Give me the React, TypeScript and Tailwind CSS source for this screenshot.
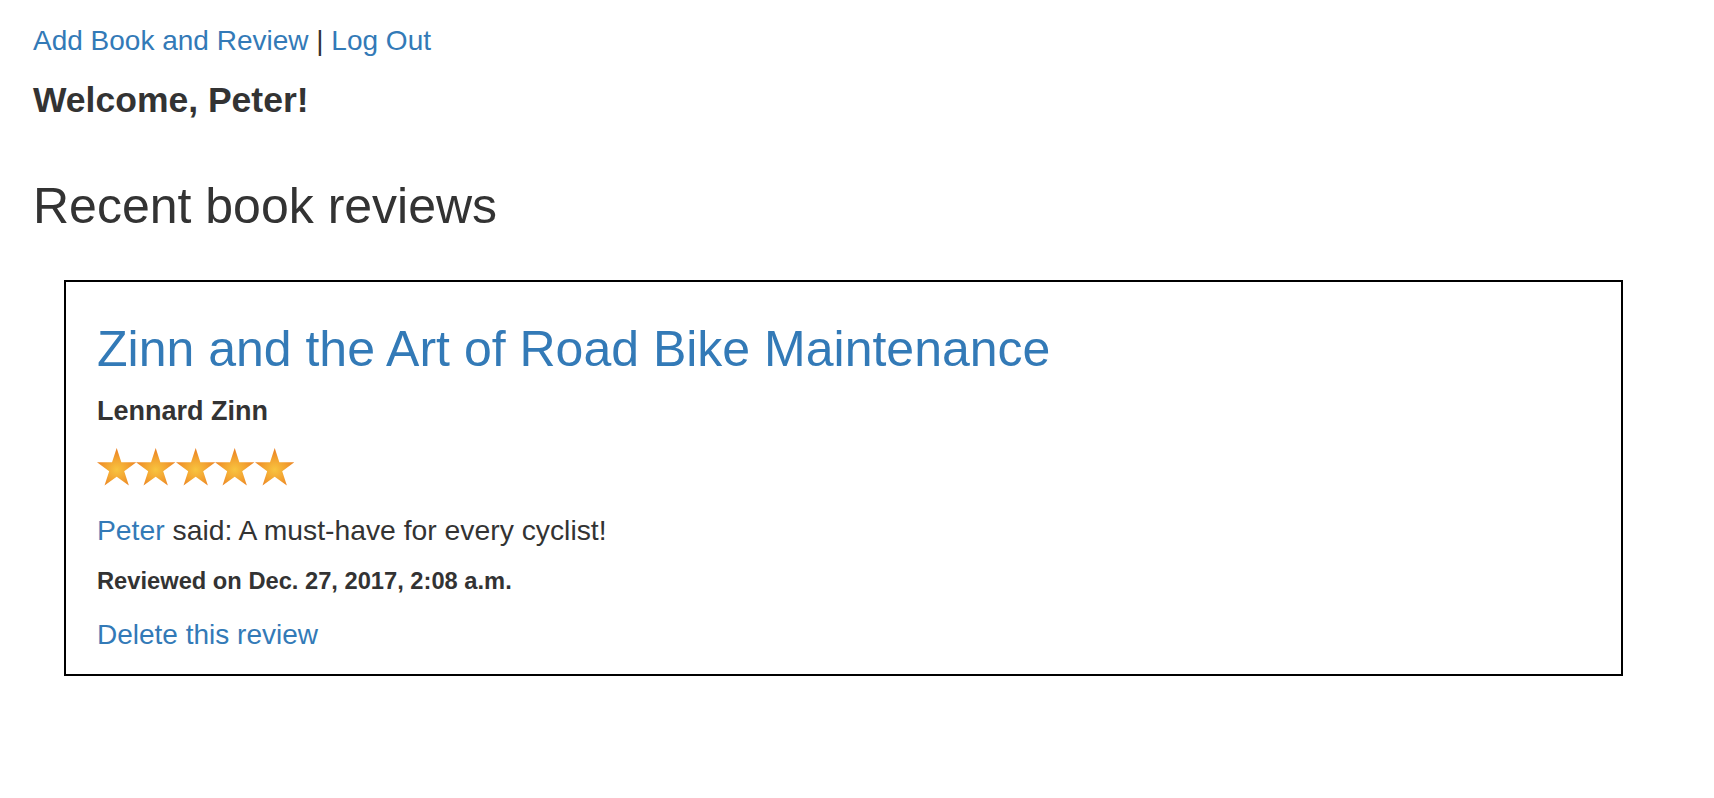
import React from 'react';

type Review = {
  title: string;
  author: string;
  rating: number;
  reviewer: string;
  text: string;
  date: string;
};

const review: Review = {
  title: 'Zinn and the Art of Road Bike Maintenance',
  author: 'Lennard Zinn',
  rating: 5,
  reviewer: 'Peter',
  text: 'A must-have for every cyclist!',
  date: 'Dec. 27, 2017, 2:08 a.m.',
};

function Star() {
  return (
    <svg width="39.4" height="37.5" viewBox="2.45 0 95.1 90.45" className="block">
      <defs>
        <radialGradient id="starFill" cx="50%" cy="58%" r="55%">
          <stop offset="0%" stopColor="#f8c43f" />
          <stop offset="50%" stopColor="#f3a532" />
          <stop offset="100%" stopColor="#eb8122" />
        </radialGradient>
      </defs>
      <polygon
        points="50,0 61.23,34.55 97.55,34.55 68.16,55.9 79.39,90.45 50,69.1 20.61,90.45 31.84,55.9 2.45,34.55 38.77,34.55"
        fill="url(#starFill)"
      />
    </svg>
  );
}

function ReviewCard({ review }: { review: Review }) {
  return (
    <div className="ml-[64px] mr-[91px] border-2 border-black pl-[31px] pt-[40px] pb-[19px]">
      <h3 className="text-[50px] leading-[55px] text-[#337ab7]">{review.title}</h3>
      <h5 className="mt-[14px] text-[27px] leading-[40px] font-bold">{review.author}</h5>
      <div className="mt-[16px] flex h-[40px] items-center">
        {[...Array(review.rating)].map((_, i) => (
          <Star key={i} />
        ))}
      </div>
      <p className="mt-[23px] text-[28.3px] leading-[40px]">
        <a className="text-[#337ab7]">{review.reviewer}</a> said: {review.text}
      </p>
      <p className="mt-[14px] text-[23.7px] leading-[34px] font-bold">Reviewed on {review.date}</p>
      <p className="mt-[17px] text-[28px] leading-[40px]">
        <a className="text-[#337ab7]">Delete this review</a>
      </p>
    </div>
  );
}

export default function App() {
  return (
    <div className="min-h-[798px] bg-white pt-[21px] font-['Liberation_Sans',Arial,sans-serif] text-[#333]">
      <div className="px-[33px]">
        <div className="text-[28px] leading-[40px]">
          <a className="text-[#337ab7]">Add Book and Review</a> | <a className="text-[#337ab7]">Log Out</a>
        </div>
        <h4 className="mt-[19px] text-[35.5px] leading-[40px] font-bold">Welcome, Peter!</h4>
        <h3 className="mt-[59px] text-[50px] leading-[55px]">Recent book reviews</h3>
      </div>
      <div className="mt-[46px]">
        <ReviewCard review={review} />
      </div>
    </div>
  );
}
